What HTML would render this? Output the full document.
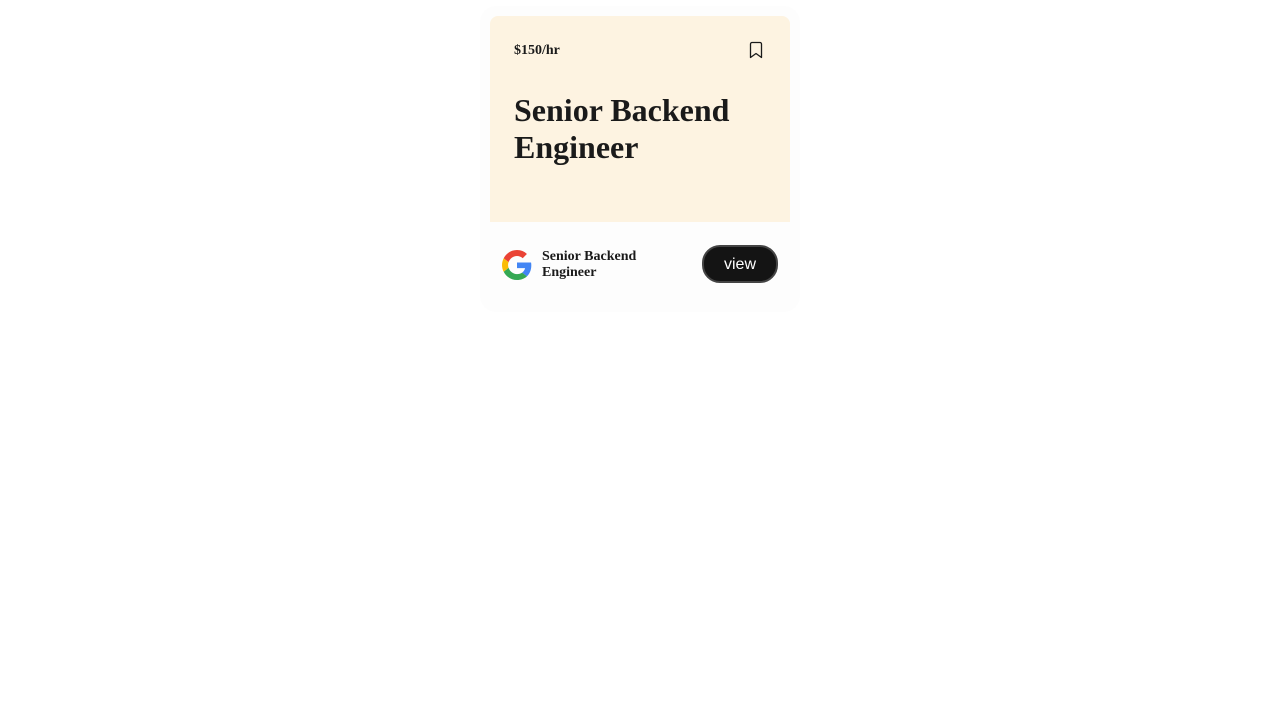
<!DOCTYPE html>
<html><head><style>
body{margin:0;background:#fff;font-family:"Liberation Serif",serif;}
.outer{position:absolute;left:480px;top:6px;width:320px;height:306px;background:#fdfdfd;border-radius:16px;}
.inner{position:absolute;left:490px;top:16px;width:300px;height:206px;background:#fdf3e1;border-radius:8px 8px 0 0;}
.price{position:absolute;left:514px;top:43px;font-size:14px;font-weight:bold;color:#1a1a1a;}
.title{position:absolute;left:514px;top:92px;font-size:32px;font-weight:bold;line-height:37px;color:#1a1a1a;}
.sub{position:absolute;left:542px;top:249px;font-size:14px;font-weight:bold;line-height:16px;color:#1a1a1a;}
.btn{position:absolute;left:702px;top:245px;width:72px;height:34px;background:#141414;border:2px solid #444;border-radius:18px;color:#fff;font-family:"Liberation Sans",sans-serif;font-size:16px;text-align:center;line-height:35px;}
</style></head><body>
<div class="outer"></div>
<div class="inner"></div>
<div class="price">$150/hr</div>
<svg style="position:absolute;left:747px;top:41px" width="18" height="18" viewBox="0 0 18 18"><path d="M5 1.5h8a1.5 1.5 0 0 1 1.5 1.5v13.5l-5.5-4-5.5 4V3A1.5 1.5 0 0 1 5 1.5z" fill="none" stroke="#1a1a1a" stroke-width="1.3" stroke-linejoin="round"/></svg>
<div class="title">Senior Backend<br>Engineer</div>
<svg style="position:absolute;left:502px;top:250px" width="30" height="30" viewBox="0 0 48 48">
<path fill="#EA4335" d="M24 9.5c3.5 0 6.6 1.2 9.1 3.6l6.8-6.8C35.8 2.4 30.3 0 24 0 14.6 0 6.6 5.4 2.7 13.3l7.9 6.1C12.5 13.6 17.8 9.5 24 9.5z"/>
<path fill="#4285F4" d="M46.9 24.5c0-1.6-.1-3.1-.4-4.5H24v9h12.9c-.6 3-2.3 5.5-4.8 7.2l7.7 6c4.5-4.2 7.1-10.3 7.1-17.7z"/>
<path fill="#FBBC05" d="M10.5 28.6c-.5-1.4-.8-3-.8-4.6s.3-3.2.8-4.6l-7.9-6.1C1 16.6 0 20.2 0 24s.9 7.4 2.6 10.7l7.9-6.1z"/>
<path fill="#34A853" d="M24 48c6.5 0 11.9-2.1 15.9-5.8l-7.7-6c-2.2 1.5-5 2.3-8.2 2.3-6.2 0-11.5-4.2-13.4-9.9l-7.9 6.1C6.6 42.6 14.6 48 24 48z"/>
</svg>
<div class="sub">Senior Backend<br>Engineer</div>
<div class="btn">view</div>
</body></html>
